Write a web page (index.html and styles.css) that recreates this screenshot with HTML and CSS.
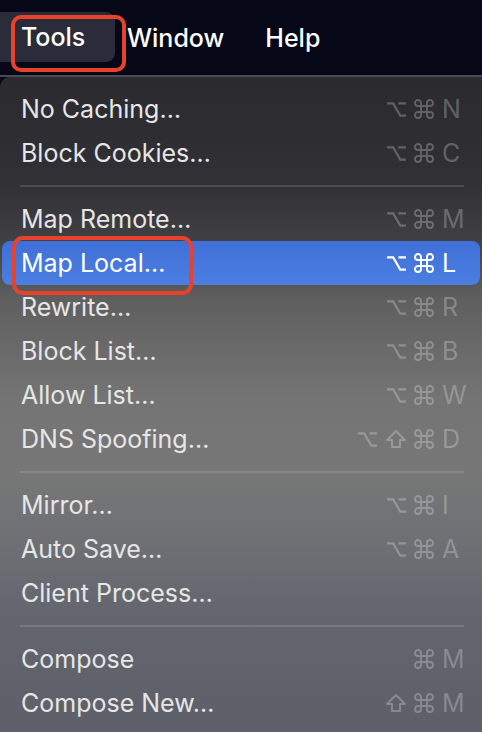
FILE: index.html
```html
<!DOCTYPE html>
<html>
<head>
<meta charset="utf-8">
<link rel="stylesheet" href="styles.css">
</head>
<body>
<svg width="0" height="0" class="defs">
  <defs>
    <symbol id="opt" viewBox="0 0 22 18"><path d="M1 2.5H7.5L15 15.5H21M13 2.5H21" fill="none" stroke="currentColor" stroke-width="2.2"/></symbol>
    <symbol id="cmd" viewBox="0 0 20 20"><path d="M7 7V4A3 3 0 1 0 4 7H16A3 3 0 1 0 13 4V16A3 3 0 1 0 16 13H4A3 3 0 1 0 7 16Z" fill="none" stroke="currentColor" stroke-width="1.9"/></symbol>
    <symbol id="shift" viewBox="0 0 22 20"><path d="M11 2L20 11H15V18H7V11H2Z" fill="none" stroke="currentColor" stroke-width="2" stroke-linejoin="round"/></symbol>
  </defs>
</svg>
<div class="menubar">
  <div class="bar-item active"><span>Tools</span></div>
  <div class="bar-item window">Window</div>
  <div class="bar-item help">Help</div>
</div>
<div class="menu">
  <div class="row"><span class="label">No Caching…</span><span class="keys"><span class="mods"><svg class="k opt"><use href="#opt"/></svg><svg class="k cmd"><use href="#cmd"/></svg></span><span class="letter">N</span></span></div>
  <div class="row"><span class="label">Block Cookies…</span><span class="keys"><span class="mods"><svg class="k opt"><use href="#opt"/></svg><svg class="k cmd"><use href="#cmd"/></svg></span><span class="letter">C</span></span></div>
  <div class="sep"></div>
  <div class="row"><span class="label">Map Remote…</span><span class="keys"><span class="mods"><svg class="k opt"><use href="#opt"/></svg><svg class="k cmd"><use href="#cmd"/></svg></span><span class="letter">M</span></span></div>
  <div class="row selected"><span class="label marked">Map Local…</span><span class="keys"><span class="mods"><svg class="k opt"><use href="#opt"/></svg><svg class="k cmd"><use href="#cmd"/></svg></span><span class="letter">L</span></span></div>
  <div class="row"><span class="label">Rewrite…</span><span class="keys"><span class="mods"><svg class="k opt"><use href="#opt"/></svg><svg class="k cmd"><use href="#cmd"/></svg></span><span class="letter">R</span></span></div>
  <div class="row"><span class="label">Block List…</span><span class="keys"><span class="mods"><svg class="k opt"><use href="#opt"/></svg><svg class="k cmd"><use href="#cmd"/></svg></span><span class="letter">B</span></span></div>
  <div class="row"><span class="label">Allow List…</span><span class="keys"><span class="mods"><svg class="k opt"><use href="#opt"/></svg><svg class="k cmd"><use href="#cmd"/></svg></span><span class="letter">W</span></span></div>
  <div class="row"><span class="label">DNS Spoofing…</span><span class="keys"><span class="mods"><svg class="k opt"><use href="#opt"/></svg><svg class="k shift"><use href="#shift"/></svg><svg class="k cmd"><use href="#cmd"/></svg></span><span class="letter">D</span></span></div>
  <div class="sep"></div>
  <div class="row"><span class="label">Mirror…</span><span class="keys"><span class="mods"><svg class="k opt"><use href="#opt"/></svg><svg class="k cmd"><use href="#cmd"/></svg></span><span class="letter">I</span></span></div>
  <div class="row"><span class="label">Auto Save…</span><span class="keys"><span class="mods"><svg class="k opt"><use href="#opt"/></svg><svg class="k cmd"><use href="#cmd"/></svg></span><span class="letter">A</span></span></div>
  <div class="row"><span class="label">Client Process…</span></div>
  <div class="sep"></div>
  <div class="row"><span class="label">Compose</span><span class="keys"><span class="mods"><svg class="k cmd"><use href="#cmd"/></svg></span><span class="letter">M</span></span></div>
  <div class="row"><span class="label">Compose New…</span><span class="keys"><span class="mods"><svg class="k shift"><use href="#shift"/></svg><svg class="k cmd"><use href="#cmd"/></svg></span><span class="letter">M</span></span></div>
</div>
</body>
</html>
```
FILE: styles.css
```css
* { box-sizing: border-box; }
html, body {
  margin: 0;
  padding: 0;
  width: 482px;
  height: 732px;
  overflow: hidden;
  background: #060818;
  font-family: Inter, "Liberation Sans", sans-serif;
}
.defs { position: absolute; }
.menubar {
  height: 77px;
  background: #060818;
  border-bottom: 2px solid #4a4a4e;
  display: flex;
  align-items: center;
  color: #fff;
  font-size: 25px;
  font-weight: 500;
}
.bar-item { line-height: 30px; flex: none; }
.bar-item.active {
  position: relative;
  background: #2a2c3a;
  height: 50px;
  width: 115px;
  border-radius: 0 9px 9px 0;
  padding-left: 21px;
  display: flex;
  align-items: center;
  margin-top: -2px;
}
.bar-item.active::after {
  content: "";
  position: absolute;
  left: 11px;
  top: 3px;
  width: 107px;
  height: 49px;
  border: 4px solid #e8422c;
  border-radius: 10px;
}
.bar-item.window { margin-left: 12px; }
.bar-item.help { margin-left: 41px; }
.menu {
  height: 655px;
  padding-top: 10px;
  border-radius: 10px 0 0 0;
  background: linear-gradient(180deg, #2a2a2f 0%, #303035 16%, #414144 25%, #5f5f60 34%, #747474 49%, #777777 60%, #6d6f74 72%, #62656d 83%, #5d6068 100%);
  display: flex;
  flex-direction: column;
}
.row {
  height: 44px;
  display: flex;
  align-items: center;
  justify-content: space-between;
  padding: 0 18px 0 21px;
  font-size: 25px;
  color: #e6e6e6;
  margin: 0 2px;
  border-radius: 8px;
}
.row .label { margin-left: -2px; }
.row.selected {
  background: linear-gradient(180deg, #3f6fd7 0%, #4b7fe1 100%);
  color: #fff;
}
.label.marked { position: relative; }
.label.marked::after {
  content: "";
  position: absolute;
  left: -9px;
  top: -12px;
  width: 173px;
  height: 51px;
  border: 4px solid #e8422c;
  border-radius: 11px;
}
.keys {
  display: flex;
  align-items: center;
  color: rgba(255, 255, 255, 0.26);
  margin-right: -2px;
}
.row.selected .keys { color: #fff; }
.mods { display: flex; align-items: center; gap: 7px; }
.k { display: block; }
.k.opt { width: 21px; height: 17px; }
.k.cmd { width: 20px; height: 20px; }
.k.shift { width: 22px; height: 20px; }
.letter { width: 22px; margin-left: 8px; }
.sep {
  height: 22px;
  display: flex;
  align-items: center;
  padding: 0 18px 0 20px;
}
.sep::before {
  content: "";
  display: block;
  width: 100%;
  height: 2px;
  background: rgba(255, 255, 255, 0.13);
}
```
